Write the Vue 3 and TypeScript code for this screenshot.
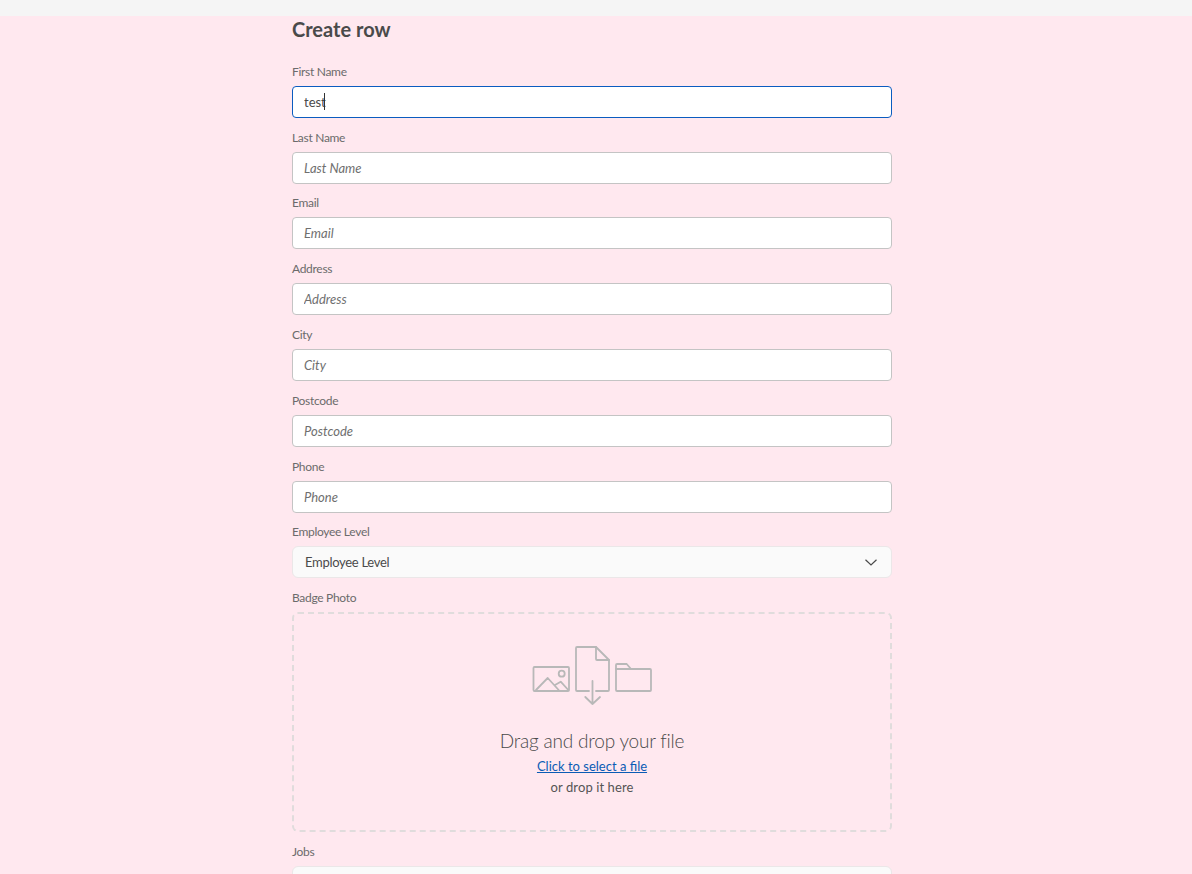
<script setup lang="ts">
const fields: string[] = ['Last Name', 'Email', 'Address', 'City', 'Postcode', 'Phone']
</script>

<template>
  <div class="page">
    <div class="topbar"></div>
    <main class="form">
      <h1 class="title">Create row</h1>
      <div class="field">
        <label class="label">First Name</label>
        <div class="focus-wrap">
          <input class="input focused" type="text" value="test" />
          <span class="caret"></span>
        </div>
      </div>
      <div v-for="f in fields" :key="f" class="field">
        <label class="label">{{ f }}</label>
        <input class="input" type="text" :placeholder="f" />
      </div>
      <div class="field">
        <label class="label">Employee Level</label>
        <div class="select">
          <span>Employee Level</span>
          <svg class="chev" width="12" height="7" viewBox="0 0 12 7" fill="none">
            <path d="M.5.7L6 6l5.500-5.300" stroke="#4a4a4a" stroke-width="1.2" />
          </svg>
        </div>
      </div>
      <div class="field">
        <label class="label">Badge Photo</label>
        <div class="drop">
          <svg class="art" width="122" height="62" viewBox="0 0 122 62" fill="none" stroke="#b8b8b8" stroke-width="1.800" stroke-linejoin="round" stroke-linecap="round">
            <rect x="2.500" y="21" width="35.500" height="24" rx="1" />
            <path d="M5 44l11.700-12 11 12M24 39l5.700-3.300 7.600 8.300" />
            <circle cx="30.700" cy="27.700" r="3" />
            <path d="M58 45H46a1 1 0 0 1-1-1V2a1 1 0 0 1 1-1h19l13 13v30a1 1 0 0 1-1 1H65" />
            <path d="M65 1v12a1 1 0 0 0 1 1h12" />
            <path d="M61.500 35v23M54.300 51l7.200 7 7.500-7" />
            <path d="M85 44V19a1 1 0 0 1 1-1h9.700l4.300 5h19a1 1 0 0 1 1 1v20a1 1 0 0 1-1 1H86a1 1 0 0 1-1-1z" />
            <path d="M85 23h15" />
          </svg>
          <div class="drag">Drag and drop your file</div>
          <a class="link" href="#">Click to select a file</a>
          <div class="or">or drop it here</div>
        </div>
      </div>
      <div class="field">
        <label class="label">Jobs</label>
        <div class="select"></div>
      </div>
    </main>
  </div>
</template>

<style scoped>
.page {
  box-sizing: border-box;
  height: 874px;
  overflow: hidden;
  padding-right: 8px;
  background: #ffe8ef;
  font-family: "Lato", "Noto Sans", sans-serif;
  color: #4a4a4a;
}
.topbar {
  height: 16px;
  margin-right: -8px;
  background: #f5f5f5;
}
.form {
  width: 600px;
  margin: 0 auto;
  display: flex;
  flex-direction: column;
  gap: 10.8px;
}
.title {
  margin: 0 0 10px;
  font-size: 20px;
  line-height: 26px;
  font-weight: 700;
  color: #4a4a4a;
}
.field {
  display: flex;
  flex-direction: column;
  gap: 5px;
}
.label {
  font-size: 12px;
  line-height: 18px;
  letter-spacing: -0.3px;
  color: #6b6b6b;
}
.focus-wrap {
  position: relative;
}
.input {
  box-sizing: border-box;
  display: block;
  width: 100%;
  height: 32px;
  padding: 0 11px;
  border: 1px solid #c4c4c4;
  border-radius: 4px;
  background: #fff;
  font: 13px "Lato", "Noto Sans", sans-serif;
  color: #4a4a4a;
  outline: none;
  caret-color: transparent;
}
.input::placeholder {
  font-style: italic;
  color: #6f6f6f;
  opacity: 1;
}
.focused {
  border-color: #0b5cc0;
}
.caret {
  position: absolute;
  left: 32px;
  top: 7px;
  width: 1px;
  height: 17px;
  background: #333;
}
.select {
  box-sizing: border-box;
  height: 32px;
  padding: 0 14px 0 12px;
  display: flex;
  align-items: center;
  justify-content: space-between;
  background: #fafafa;
  border: 1px solid #ebe7e8;
  border-radius: 6px;
  font-size: 13px;
  letter-spacing: -0.3px;
  color: #4a4a4a;
}
.drop {
  box-sizing: border-box;
  height: 220px;
  border: 2px dashed #e0dcdc;
  border-radius: 6px;
  display: flex;
  flex-direction: column;
  align-items: center;
  padding-top: 31.5px;
}
.art {
  margin-bottom: 20.5px;
}
.drag {
  font-size: 19px;
  line-height: 26px;
  font-weight: 300;
  letter-spacing: -0.2px;
  color: #4a4a4a;
}
.link {
  font-size: 13px;
  line-height: 21px;
  margin-top: 2px;
  color: #0b5cb5;
}
.or {
  font-size: 13px;
  line-height: 21px;
  letter-spacing: 0.1px;
  color: #555;
}
</style>
